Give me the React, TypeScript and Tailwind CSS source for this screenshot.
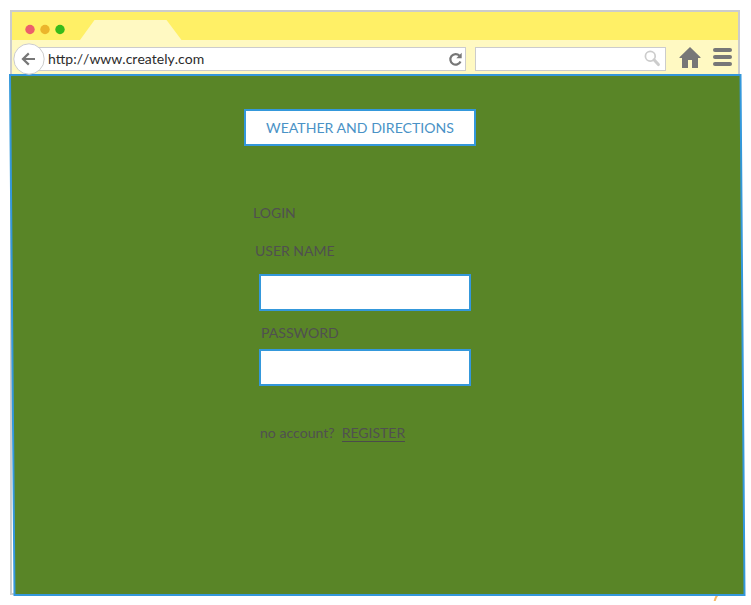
import React from "react";

function TitleBar() {
  return (
    <div className="flex h-7 bg-[#fff066]">
      <svg className="ml-[13px] mt-3" width="40" height="11" viewBox="0 0 40 11">
        <circle cx="5" cy="5.500" r="4.700" fill="#ec5f6b" />
        <circle cx="20" cy="5.500" r="4.700" fill="#ebb52c" />
        <circle cx="35" cy="5.500" r="4.700" fill="#38bb1a" />
      </svg>
      <svg className="ml-[15px] mt-2" width="102" height="20" viewBox="0 0 102 20">
        <path d="M0 20L14.500 0H86.500L101.500 20Z" fill="#fff9c2" />
      </svg>
    </div>
  );
}

function Toolbar() {
  return (
    <div className="flex h-[35px] items-start bg-[#fff9c2]">
      <svg className="relative z-10 ml-[1px] mt-[3px] shrink-0" width="32" height="32" viewBox="0 0 32 32">
        <circle cx="16" cy="16" r="15.200" fill="#fff" stroke="#ccc" />
        <path d="M22 16H10.500M15.800 10.400L10 16L15.800 21.600" fill="none" stroke="#777" strokeWidth="2.200" />
      </svg>
      <div className="-ml-[10px] mt-[7px] flex h-6 w-[431px] shrink-0 items-center border border-[#ccc] bg-white">
        <span className="ml-[12px] whitespace-nowrap text-[14px] leading-[22px] text-[#2b2b2b] [font-kerning:none]">http://www.creately.com</span>
        <svg className="ml-auto mr-[2px]" width="15" height="16" viewBox="0 0 15 16">
          <path d="M11.500 4.700A5.300 5.300 0 1 0 12.500 10.500" fill="none" stroke="#777" strokeWidth="2.200" />
          <path d="M13.700 1.800V7.200H8.300Z" fill="#777" />
        </svg>
      </div>
      <div className="ml-[9px] mt-[7px] flex h-6 w-[191px] shrink-0 justify-end border border-[#ccc] bg-white">
        <svg className="mr-[4px] mt-[2px]" width="17" height="17" viewBox="0 0 17 17">
          <circle cx="6.300" cy="6.200" r="4.900" fill="none" stroke="#ccc" strokeWidth="1.700" />
          <path d="M10 9.800L14.400 14.600" stroke="#ccc" strokeWidth="3" strokeLinecap="round" />
        </svg>
      </div>
      <svg className="ml-[13px] mt-[7px] shrink-0" width="22" height="21" viewBox="0 0 22 21">
        <path d="M11 0L21.500 10.300V11H19V21H13V13H9V21H3V11H.5V10.300Z" fill="#777" />
      </svg>
      <div className="ml-[12px] mt-2 flex flex-col gap-[3px]">
        <span className="h-1 w-[19px] rounded-full bg-[#777]" />
        <span className="h-1 w-[19px] rounded-full bg-[#777]" />
        <span className="h-1 w-[19px] rounded-full bg-[#777]" />
      </div>
    </div>
  );
}

export default function App() {
  return (
    <div className="relative h-[605px] w-[751px] overflow-hidden bg-white pl-[10px] pt-[10px] font-['Lato',sans-serif]">
      <div className="h-[585px] w-[730px] border-2 border-[#ccc]">
        <TitleBar />
        <Toolbar />
        <main className="relative flex flex-col items-start text-[14px] leading-5 text-[#505050]">
          <svg className="absolute -left-[4px] -top-[2px]" width="740" height="524" viewBox="0 0 740 524">
            <path d="M2 2H732.500L736.500 522H6.500Z" fill="#598527" stroke="#3498db" strokeWidth="2" />
          </svg>
          <h1 className="relative ml-[232px] mt-[34px] flex h-[37px] w-[232px] items-center justify-center border-2 border-[#3498db] bg-white text-[14.1px] text-[#4a92c6]">
            WEATHER AND DIRECTIONS
          </h1>
          <h2 className="relative ml-[241px] mt-[57px]">LOGIN</h2>
          <label className="relative ml-[243px] mt-[18px]" htmlFor="user">USER NAME</label>
          <input id="user" className="relative ml-[247px] mt-[13px] h-[37px] w-[212px] border-2 border-[#3498db] bg-white" />
          <label className="relative ml-[249px] mt-[12px] text-[14.1px]" htmlFor="pass">PASSWORD</label>
          <input id="pass" type="password" className="relative ml-[247px] mt-[6px] h-[37px] w-[212px] border-2 border-[#3498db] bg-white" />
          <p className="relative ml-[248px] mt-[37px] flex gap-[7px]">
            <span className="text-[14.1px]">no account?</span>
            <a className="h-[19px] border-b border-[#4b4b4b]">REGISTER</a>
          </p>
        </main>
      </div>
      <svg className="absolute left-[712px] top-[596px]" width="8" height="5" viewBox="0 0 8 5">
        <path d="M5.500 -1Q3 2 2.500 6" fill="none" stroke="#f7b765" strokeWidth="2" />
      </svg>
    </div>
  );
}
